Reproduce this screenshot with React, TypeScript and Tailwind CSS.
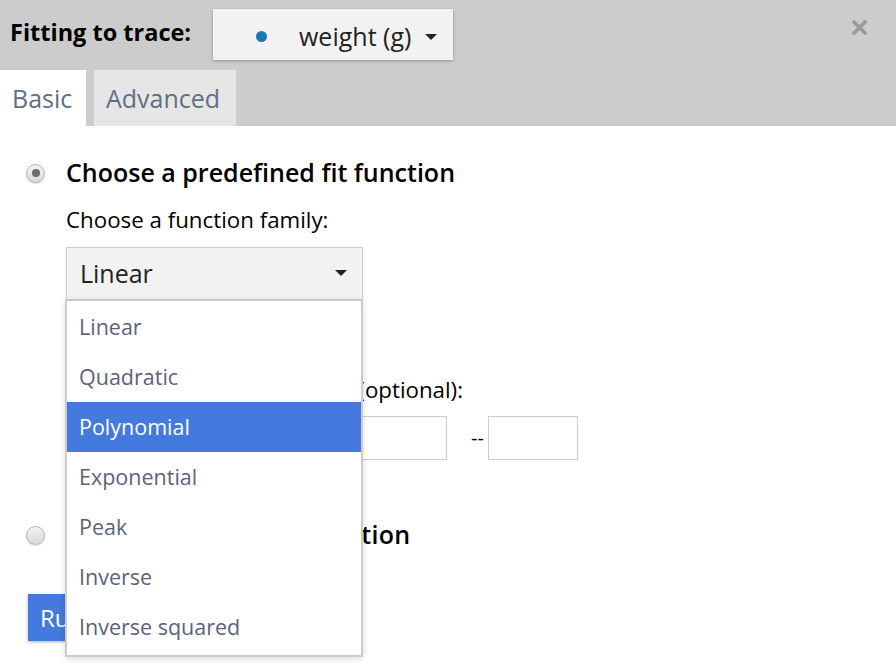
import React from "react";

const options = ["Linear", "Quadratic", "Polynomial", "Exponential", "Peak", "Inverse", "Inverse squared"];

function Caret() {
  return (
    <svg width="12" height="7" viewBox="0 0 12 7">
      <path d="M0 0 L12 0 L6 6 Z" fill="#222" />
    </svg>
  );
}

function Radio({ checked }: { checked: boolean }) {
  return (
    <div className="w-[19px] h-[19px] rounded-full border border-[#b5b5b5] bg-gradient-to-b from-[#f4f4f4] to-[#d9d9d9] shadow-[0_1px_1px_rgba(0,0,0,0.15)] flex items-center justify-center shrink-0">
      {checked && <div className="w-[8px] h-[8px] rounded-full bg-[#6b6b6b]" />}
    </div>
  );
}

export default function App() {
  return (
    <div className="w-[896px] h-[664px] overflow-hidden bg-white text-black" style={{ fontFamily: '"Open Sans", sans-serif' }}>
      {/* header */}
      <div className="bg-[#cccccc] h-[126px] flex flex-col">
        <div className="flex items-start h-[70px]">
          <div className="pl-[10px] pt-[16px] text-[23.5px] font-bold leading-[32px] w-[213px]">Fitting to trace:</div>
          <div className="mt-[9px] w-[240px] h-[51px] bg-[#f2f2f2] shadow-[0_1px_3px_rgba(0,0,0,0.3)] flex items-center pt-[4px]">
            <div className="ml-[43px] w-[11px] h-[11px] rounded-full bg-[#1f77b4]" />
            <span className="ml-[32px] text-[25px] text-[#222]">weight (g)</span>
            <span className="ml-[14px] mt-[2px]"><Caret /></span>
          </div>
          <div className="ml-auto mr-[29px] mt-[20px]">
            <svg width="15" height="15" viewBox="0 0 15 15">
              <path d="M2 2 L13 13 M13 2 L2 13" stroke="#999" strokeWidth="3.5" strokeLinecap="square" />
            </svg>
          </div>
        </div>
        <div className="flex h-[56px] text-[25px] text-[#5f6f87]">
          <div className="bg-white w-[86px] pl-[12px] pt-[10px]">Basic</div>
          <div className="bg-[#e6e6e6] ml-[8px] w-[142px] pl-[12px] pt-[10px]">Advanced</div>
        </div>
      </div>

      {/* body */}
      <div className="pl-[26px]">
        <div className="flex items-center h-[34px] mt-[30px]">
          <Radio checked />
          <span className="ml-[21px] text-[25px] font-semibold">Choose a predefined fit function</span>
        </div>
        <div className="pl-[40px]">
          <div className="text-[22.3px] h-[30px] mt-[15px] flex items-center">Choose a function family:</div>
          <div className="relative mt-[12px] w-[297px]">
            <div className="h-[53px] bg-[#f2f2f2] border border-[#cccccc] shadow-[0_1px_2px_rgba(0,0,0,0.12)] flex items-center pl-[13px] pr-[15px]">
              <span className="text-[25px] text-[#222]">Linear</span>
              <span className="ml-auto"><Caret /></span>
            </div>
            {/* open dropdown menu */}
            <div className="absolute left-[-1px] top-[53px] w-[298px] bg-white border-2 border-t border-[#cccccc] shadow-[0_2px_6px_rgba(0,0,0,0.15)] z-10 pt-[1px] pb-[3px]">
              {options.map((o) => (
                <div
                  key={o}
                  className={`h-[50px] flex items-center pl-[12px] text-[21.5px] ${o === "Polynomial" ? "bg-[#4479dd] text-white" : "text-[#5b6379]"}`}
                >
                  {o}
                </div>
              ))}
            </div>
          </div>
          <div className="text-[22.3px] mt-[75px] h-[30px] flex items-center">Restrict fitting to an x range (optional):</div>
          <div className="flex items-center mt-[11px]">
            <div className="ml-[220px] w-[161px] h-[44px] border border-[#cccccc]" />
            <span className="ml-[24px] mr-[4px] text-[20px]">--</span>
            <div className="w-[90px] h-[44px] border border-[#cccccc]" />
          </div>
        </div>
        <div className="flex items-center h-[34px] mt-[58px]">
          <Radio checked={false} />
          <span className="ml-[21px] text-[25px] font-semibold tracking-[0.3px]">Define a custom fit function</span>
        </div>
        <div className="mt-[42px] ml-[2px]">
          <button className="bg-[#4479dd] text-white text-[24px] h-[47px] px-[12px] shadow-[0_1px_3px_rgba(0,0,0,0.3)]">Run fit</button>
        </div>
      </div>
    </div>
  );
}
